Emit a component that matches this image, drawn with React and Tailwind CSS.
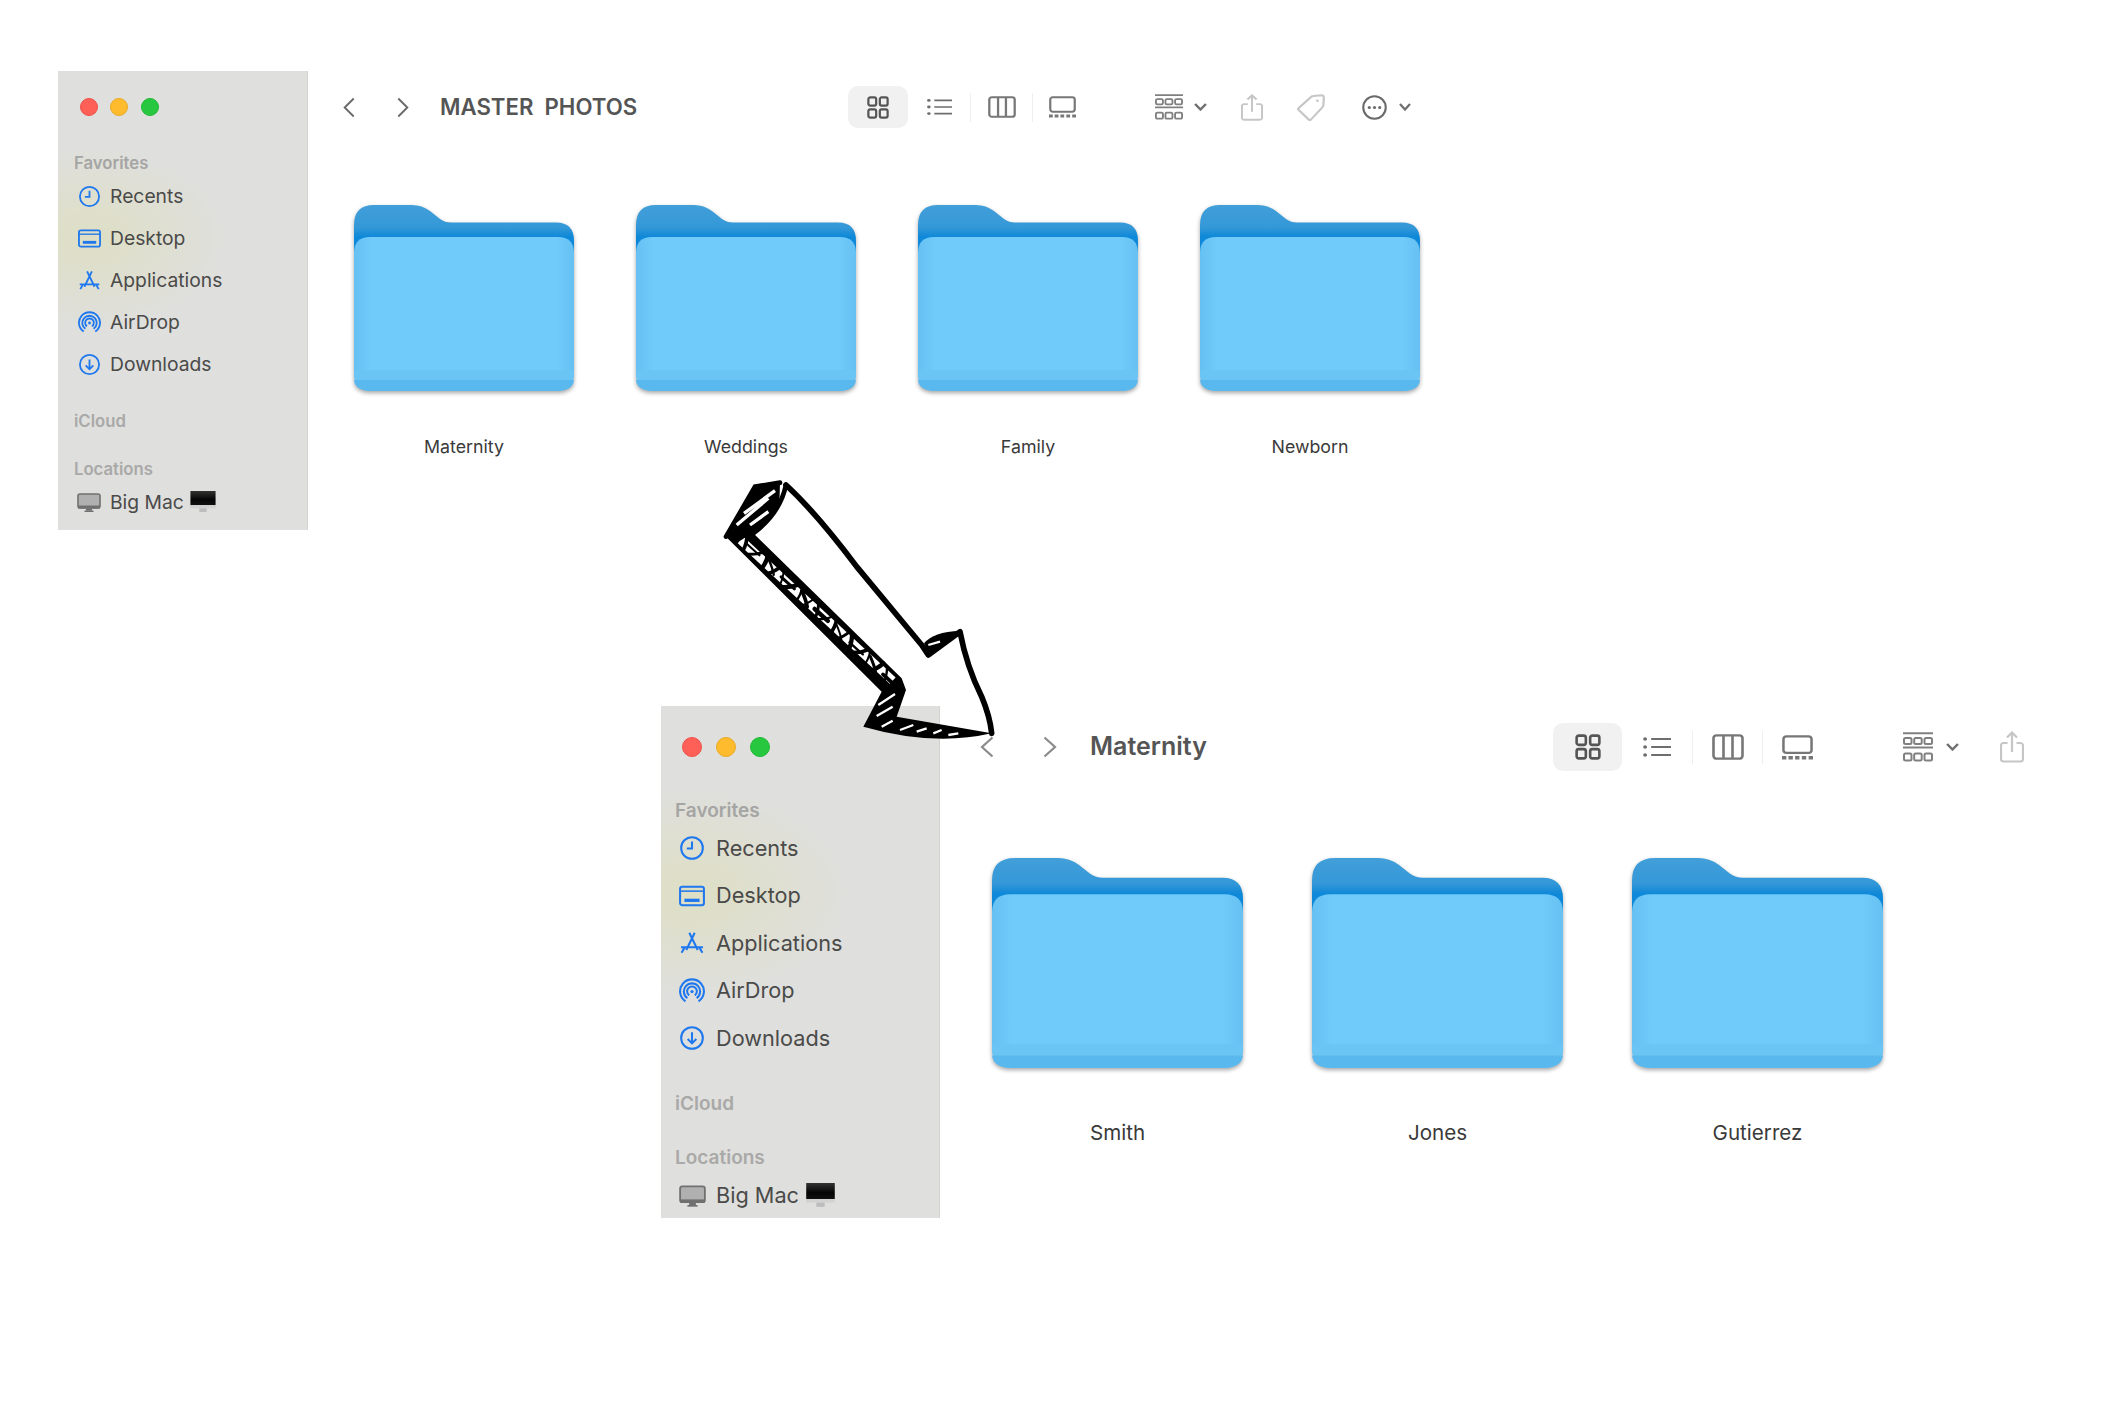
import React from 'react';

const FONT = 'font-["Inter","Liberation_Sans",sans-serif]';

const topFolders = ['Maternity', 'Weddings', 'Family', 'Newborn'];
const bottomFolders = ['Smith', 'Jones', 'Gutierrez'];

function FolderIcon({ className }) {
    return (
        <svg viewBox="0 0 220 186" preserveAspectRatio="none" className={`block overflow-visible drop-shadow-[0_2px_2px_rgba(0,0,0,0.35)] ${className}`}>
            <defs>
                <linearGradient id="folderBack" x1="0" y1="0" x2="0" y2="1">
                    <stop offset="0" stopColor="#429fd9" />
                    <stop offset="0.28" stopColor="#3498d8" />
                    <stop offset="0.4" stopColor="#0e88d8" />
                </linearGradient>
                <linearGradient id="folderFront" x1="0" y1="0" x2="1" y2="0">
                    <stop offset="0" stopColor="#66c1f2" />
                    <stop offset="0.08" stopColor="#70cbfb" />
                    <stop offset="0.92" stopColor="#70cbfb" />
                    <stop offset="1" stopColor="#66c1f2" />
                </linearGradient>
            </defs>
            <path d="M0 20 Q0 0 20 0 H58 Q68 0 76 6 L86 14 Q91 17.5 97 17.5 H202 Q220 17.5 220 36 V80 H0 Z" fill="url(#folderBack)" />
            <path d="M0 48 Q0 32 16 32 H204 Q220 32 220 48 V168 Q220 186 202 186 H18 Q0 186 0 168 Z" fill="url(#folderFront)" />
            <path d="M0 165 H220 V168 Q220 186 202 186 H18 Q0 186 0 168 Z" fill="#6ac5f5" />
            <path d="M0 175 H220 Q219 186 202 186 H18 Q1 186 0 175 Z" fill="#59b9ee" />
        </svg>
    );
}

// toolbar glyphs
const GridIcon = ({ className }) => (
    <svg viewBox="0 0 24 24" preserveAspectRatio="none" fill="none" stroke="currentColor" strokeWidth="2.4" className={className}>
        <rect x="1.5" y="1.5" width="8.5" height="8.5" rx="2" />
        <rect x="14" y="1.5" width="8.5" height="8.5" rx="2" />
        <rect x="1.5" y="14" width="8.5" height="8.5" rx="2" />
        <rect x="14" y="14" width="8.5" height="8.5" rx="2" />
    </svg>
);

const ListIcon = ({ className }) => (
    <svg viewBox="0 0 24 22" preserveAspectRatio="none" fill="none" stroke="currentColor" strokeWidth="2.1" className={className}>
        <path d="M7 3h17M7 11h17M7 19h17" />
        <circle cx="1.8" cy="3" r="1.7" fill="currentColor" stroke="none" />
        <circle cx="1.8" cy="11" r="1.7" fill="currentColor" stroke="none" />
        <circle cx="1.8" cy="19" r="1.7" fill="currentColor" stroke="none" />
    </svg>
);

const ColumnsIcon = ({ className }) => (
    <svg viewBox="0 0 32 28" preserveAspectRatio="none" fill="none" stroke="currentColor" strokeWidth="2.6" className={className}>
        <rect x="1.5" y="1.5" width="29" height="25" rx="3" />
        <path d="M11.5 1.5v25M20.5 1.5v25" />
    </svg>
);

const GalleryIcon = ({ className }) => (
    <svg viewBox="0 0 32 28" preserveAspectRatio="none" fill="none" stroke="currentColor" strokeWidth="2.6" className={className}>
        <rect x="1.5" y="1.5" width="29" height="18.5" rx="3" />
        <path d="M0 25.5h4.5M6.7 25.5h4.5M13.5 25.5h4.5M20.5 25.5h4.5M27.5 25.5h4.5" strokeWidth="4" />
    </svg>
);

const GroupIcon = ({ className }) => (
    <svg viewBox="0 0 30 30" preserveAspectRatio="none" fill="none" stroke="currentColor" strokeWidth="2" className={className}>
        <path d="M0 1.2h30M0 15.5h30" />
        <rect x="1" y="6" width="7.5" height="6" rx="1.5" />
        <rect x="11.2" y="6" width="7.5" height="6" rx="1.5" />
        <rect x="21.5" y="6" width="7.5" height="6" rx="1.5" />
        <rect x="1" y="21.5" width="7.5" height="7" rx="1.5" />
        <rect x="11.2" y="21.5" width="7.5" height="7" rx="1.5" />
        <rect x="21.5" y="21.5" width="7.5" height="7" rx="1.5" />
    </svg>
);

const ChevronDown = ({ className }) => (
    <svg viewBox="0 0 12 8" preserveAspectRatio="none" fill="none" stroke="currentColor" strokeWidth="2.3" className={className}>
        <path d="M1 1l5 5.5L11 1" />
    </svg>
);

const ShareIcon = ({ className }) => (
    <svg viewBox="0 0 24 32" preserveAspectRatio="none" fill="none" stroke="currentColor" strokeWidth="2.2" className={className}>
        <path d="M7.5 12H3.5a2.5 2.5 0 0 0-2.5 2.5V28a2.5 2.5 0 0 0 2.5 2.5h17A2.5 2.5 0 0 0 23 28V14.5A2.5 2.5 0 0 0 20.5 12h-4" />
        <path d="M12 21V2M7 6.5L12 1.5l5 5" />
    </svg>
);

const TagIcon = ({ className }) => (
    <svg viewBox="0 0 24 27" preserveAspectRatio="none" fill="none" stroke="currentColor" strokeWidth="1.9" className={className}>
        <path d="M14 2L21 1.2Q23 1.2 23 3.6L22.6 11Q22.5 12.6 21.5 13.6L12 25.5Q11 26.6 10 25.5L1.5 16Q.5 15 1.5 14L12 3Q13 2 14 2Z" />
        <circle cx="17.5" cy="6.8" r="1.2" fill="currentColor" stroke="none" />
    </svg>
);

const MoreIcon = ({ className }) => (
    <svg viewBox="0 0 24 24" preserveAspectRatio="none" fill="none" stroke="currentColor" strokeWidth="2" className={className}>
        <circle cx="12" cy="12" r="10.8" />
        <circle cx="7" cy="12" r="1.5" fill="currentColor" stroke="none" />
        <circle cx="12" cy="12" r="1.5" fill="currentColor" stroke="none" />
        <circle cx="17" cy="12" r="1.5" fill="currentColor" stroke="none" />
    </svg>
);

const NavChevron = ({ dir, className }) => (
    <svg viewBox="0 0 14 22" preserveAspectRatio="none" fill="none" stroke="currentColor" strokeWidth="2.2" className={className}>
        <path d={dir === 'left' ? 'M12.5 1.5L2 11l10.5 9.5' : 'M1.5 1.5L12 11 1.5 20.5'} />
    </svg>
);

// sidebar glyphs
const sidebarIcons = {
    Recents: (
        <>
            <circle cx="12" cy="12" r="10" />
            <path d="M12 6v6.4H7.2" />
        </>
    ),
    Desktop: (
        <>
            <rect x="1" y="3.5" width="22" height="17" rx="2" />
            <path d="M1 7.5h22" strokeWidth="1.4" />
            <rect x="5" y="14.5" width="14" height="3" fill="currentColor" stroke="none" />
        </>
    ),
    Applications: <path d="M9.5 2.5l7.8 16M14.5 2.5L6.7 18.5M1.8 16h20.4M2.4 21l2.6-4.5M21.6 21L19 16.5" />,
    AirDrop: (
        <>
            <path d="M5.98 21.5A11 11 0 1 1 18.02 21.5M7.7 18.6A7.5 7.5 0 1 1 16.3 18.6M9.42 16A4.5 4.5 0 1 1 14.58 16" />
            <circle cx="12" cy="12.5" r="1.5" fill="currentColor" stroke="none" />
        </>
    ),
    Downloads: (
        <>
            <circle cx="12" cy="12" r="10" />
            <path d="M12 6.8v10M8 13l4 4 4-4" />
        </>
    ),
};

const favorites = ['Recents', 'Desktop', 'Applications', 'AirDrop', 'Downloads'];

function MacDrive({ className }) {
    return (
        <svg viewBox="0 0 24 21" className={className}>
            <rect x="1" y="2" width="22" height="14" rx="2" fill="#b0b0b0" stroke="#707070" strokeWidth="1.6" />
            <rect x="1" y="13.5" width="22" height="3" fill="#707070" />
            <path d="M9 16.5h6v2.2H9z" fill="#707070" />
            <path d="M7.5 18.5h9V20h-9z" fill="#707070" />
        </svg>
    );
}

function IMacEmoji({ className }) {
    return (
        <svg viewBox="0 0 24 21" className={className}>
            <defs>
                <linearGradient id="imacScreen" x1="0" y1="0" x2="0" y2="1">
                    <stop offset="0" stopColor="#333" />
                    <stop offset="0.6" stopColor="#050505" />
                    <stop offset="1" stopColor="#111" />
                </linearGradient>
            </defs>
            <rect x="0" y="0" width="24" height="13.5" fill="url(#imacScreen)" />
            <rect x="0" y="13.5" width="24" height="3" fill="#d2d2d2" />
            <rect x="8.5" y="16.5" width="7" height="3.5" fill="#bcbcbc" />
        </svg>
    );
}

function Sidebar({ big }) {
    const s = big
        ? {
              root: 'w-[279px] h-[512px] bg-[radial-gradient(ellipse_160px_105px_at_30px_187px,#dedfc4,transparent)] pt-[31px]',
              dots: 'pl-[21px] gap-[14px]',
              dot: 'size-[20px]',
              header: 'h-[22px] leading-[22px] pl-[14px] text-[19px]',
              fav: 'mt-[42.5px]',
              rows: 'mt-[3px]',
              row: 'h-[47.5px] pl-[17px]',
              slot: 'w-[28px]',
              icon: 'size-[26px]',
              label: 'ml-[10px] text-[21.7px]',
              icloud: 'mt-[31px]',
              locations: 'mt-[32px]',
              macRow: 'mt-[4px]',
              mac: 'w-[27px] h-[24px]',
              imac: 'w-[29px] h-[25px] ml-[7px]',
          }
        : {
              root: 'w-[250px] h-[459px] bg-[radial-gradient(ellipse_140px_90px_at_30px_167px,#dedfc4,transparent)] pt-[27px]',
              dots: 'pl-[21.5px] gap-[12.5px]',
              dot: 'size-[18px]',
              header: 'h-[20px] leading-[20px] pl-[16px] text-[16.7px]',
              fav: 'mt-[37px]',
              rows: 'mt-[2px]',
              row: 'h-[42px] pl-[19px]',
              slot: 'w-[24px]',
              icon: 'size-[23px]',
              label: 'ml-[9px] text-[19.3px]',
              icloud: 'mt-[26px]',
              locations: 'mt-[28px]',
              macRow: 'mt-[2px]',
              mac: 'w-[24px] h-[21px]',
              imac: 'w-[26px] h-[22px] ml-[6px]',
          };

    return (
        <aside className={`shrink-0 bg-[#dfdfdd] border-r border-[#d3d3d1] flex flex-col ${s.root}`}>
            <div className={`flex items-center ${s.dots}`}>
                <span className={`rounded-full bg-[#fe5f57] border border-[#ee5048] ${s.dot}`} />
                <span className={`rounded-full bg-[#febb2e] border border-[#eaaa24] ${s.dot}`} />
                <span className={`rounded-full bg-[#27c83f] border border-[#20b835] ${s.dot}`} />
            </div>

            <div className={`font-semibold text-[#a5a5a4] ${s.header} ${s.fav}`}>Favorites</div>
            <div className={s.rows}>
                {favorites.map(name => (
                    <div key={name} className={`flex items-center ${s.row}`}>
                        <span className={`flex justify-center shrink-0 ${s.slot}`}>
                            <svg viewBox="0 0 24 24" fill="none" stroke="currentColor" strokeWidth="1.9" className={`text-[#1f78ee] shrink-0 ${s.icon}`}>
                                {sidebarIcons[name]}
                            </svg>
                        </span>
                        <span className={`text-[#4a4a49] ${s.label}`}>{name}</span>
                    </div>
                ))}
            </div>

            <div className={`font-semibold text-[#a9a9a8] ${s.header} ${s.icloud}`}>iCloud</div>
            <div className={`font-semibold text-[#a9a9a8] ${s.header} ${s.locations}`}>Locations</div>
            <div className={`flex items-center ${s.row} ${s.macRow}`}>
                <span className={`flex justify-center shrink-0 ${s.slot}`}>
                    <MacDrive className={s.mac} />
                </span>
                <span className={`text-[#4a4a49] ${s.label}`}>Big Mac</span>
                <IMacEmoji className={s.imac} />
            </div>
        </aside>
    );
}

function TopToolbar() {
    return (
        <div className="flex items-center h-[42px] mt-[15px]">
            <NavChevron dir="left" className="w-[12px] h-[21px] ml-[35px] text-[#6a6a6a] shrink-0" />
            <NavChevron dir="right" className="w-[12px] h-[21px] ml-[42px] text-[#6a6a6a] shrink-0" />
            <h1 className="w-[408px] ml-[31px] shrink-0 text-[22.2px] font-semibold text-[#555] whitespace-pre">MASTER  PHOTOS</h1>
            <div className="w-[60px] h-[42px] rounded-[10px] bg-[#f1f1f1] flex items-center justify-center shrink-0">
                <GridIcon className="w-[22px] h-[23px] text-[#555]" />
            </div>
            <div className="w-[62px] flex justify-center shrink-0">
                <ListIcon className="w-[25px] h-[18px] text-[#6e6e6e]" />
            </div>
            <div className="w-px h-[29px] bg-[#eeeeee] shrink-0" />
            <div className="w-[61px] flex justify-center shrink-0">
                <ColumnsIcon className="w-[28px] h-[22px] text-[#777]" />
            </div>
            <div className="w-px h-[29px] bg-[#eeeeee] shrink-0" />
            <div className="w-[59px] flex justify-center shrink-0">
                <GalleryIcon className="w-[27px] h-[22px] text-[#777]" />
            </div>
            <GroupIcon className="w-[28px] h-[26px] ml-[63px] text-[#808080] shrink-0" />
            <ChevronDown className="w-[13px] h-[8px] ml-[11px] text-[#707070] shrink-0" />
            <ShareIcon className="w-[22px] h-[27px] ml-[34px] text-[#c6c6c6] shrink-0" />
            <TagIcon className="w-[28px] h-[27px] ml-[34px] text-[#c6c6c6] shrink-0" />
            <MoreIcon className="w-[25px] h-[25px] ml-[37px] text-[#6a6a6a] shrink-0" />
            <ChevronDown className="w-[12px] h-[8px] ml-[12px] text-[#707070] shrink-0" />
        </div>
    );
}

function BottomToolbar() {
    return (
        <div className="flex items-center h-[48px] mt-[17px]">
            <NavChevron dir="left" className="w-[14px] h-[22px] ml-[40px] text-[#8a8a8a] shrink-0" />
            <NavChevron dir="right" className="w-[14px] h-[22px] ml-[49px] text-[#8a8a8a] shrink-0" />
            <h1 className="w-[463px] ml-[33px] shrink-0 text-[25px] font-semibold text-[#555]">Maternity</h1>
            <div className="w-[69px] h-[48px] rounded-[10px] bg-[#f1f1f1] flex items-center justify-center shrink-0">
                <GridIcon className="w-[26px] h-[26px] text-[#555]" />
            </div>
            <div className="w-[70px] flex justify-center shrink-0">
                <ListIcon className="w-[28px] h-[22px] text-[#6e6e6e]" />
            </div>
            <div className="w-px h-[33px] bg-[#eeeeee] shrink-0" />
            <div className="w-[69px] flex justify-center shrink-0">
                <ColumnsIcon className="w-[32px] h-[26px] text-[#777]" />
            </div>
            <div className="w-px h-[33px] bg-[#eeeeee] shrink-0" />
            <div className="w-[69px] flex justify-center shrink-0">
                <GalleryIcon className="w-[31px] h-[25px] text-[#777]" />
            </div>
            <GroupIcon className="w-[30px] h-[30px] ml-[71px] text-[#808080] shrink-0" />
            <ChevronDown className="w-[13px] h-[8px] ml-[13px] text-[#707070] shrink-0" />
            <ShareIcon className="w-[24px] h-[32px] ml-[41px] text-[#c6c6c6] shrink-0" />
        </div>
    );
}

// Uneven black scribbles across the white inner band of the arrow's side
const shaftHatch = [0, 0.03, 0.08, 0.105, 0.16, 0.2, 0.22, 0.27, 0.31, 0.33, 0.385, 0.42, 0.44, 0.5, 0.53, 0.55, 0.61, 0.645, 0.67, 0.72, 0.76, 0.78, 0.83, 0.87, 0.89, 0.95, 0.98].map((t, i) => {
    const x = 122 + 456 * t;
    const y = 203 + 437 * t;
    const [dx, dy] = [[22, -12], [6, -24], [-20, -18], [24, -4], [10, -22], [-8, -24]][i % 6];
    return { d: `M${x - dx} ${y - dy}Q${x + 5} ${y + 5} ${x + dx} ${y + dy}`, w: [7, 11, 6, 9, 13][i % 5] };
});

function HandArrow() {
    return (
        <svg viewBox="0 0 960 900" className="absolute left-[700px] top-[470px] w-[320px] h-[300px] pointer-events-none">
            {/* shaft side and cap */}
            <path d="M78 200L165 50 240 38 238 105 160 190 605 625 618 660 590 740 875 790Q700 830 490 770L545 665Z" fill="#000" />
            <path d="M78 200L165 50 240 38" fill="none" stroke="#000" strokeWidth="14" strokeLinecap="round" />
            {/* top face is left white */}
            <path d="M258 45Q350 130 470 290L665 525 685 555 780 485Q800 590 845 680 870 740 875 790" fill="none" stroke="#000" strokeWidth="17" strokeLinecap="round" strokeLinejoin="round" />
            <path d="M258 45Q240 130 160 190" fill="none" stroke="#000" strokeWidth="14" strokeLinecap="round" />
            <path d="M672 520Q700 485 780 482L690 558Z" fill="#000" />
            {/* hatching */}
            <path d="M110 165L205 85M132 130L225 62M150 165L205 125" stroke="#fff" strokeWidth="10" fill="none" />
            <path d="M685 525L720 515" stroke="#fff" strokeWidth="7" fill="none" />
            <path d="M122 210L578 632" stroke="#fff" strokeWidth="26" fill="none" />
            {shaftHatch.map((h, i) => (
                <path key={i} d={h.d} stroke="#000" strokeWidth={h.w} fill="none" strokeLinecap="round" />
            ))}
            <path d="M535 705L585 672M530 738L578 710M545 770L578 752M600 780L640 765M650 785L680 775M700 790L725 780M745 795L775 790" stroke="#fff" strokeWidth="7" fill="none" />
        </svg>
    );
}

export default function App() {
    return (
        <div className={`relative w-[2126px] h-[1406px] bg-white overflow-hidden ${FONT}`}>
            <section className="flex ml-[58px] pt-[71px]">
                <Sidebar />
                <div className="flex flex-col">
                    <TopToolbar />
                    <div className="flex gap-[62px] ml-[46px] mt-[77px]">
                        {topFolders.map(name => (
                            <div key={name} className="w-[220px] flex flex-col items-center">
                                <FolderIcon className="w-[220px] h-[186px]" />
                                <span className="mt-[44px] text-[17.8px] leading-[24px] text-[#3a3a3a]">{name}</span>
                            </div>
                        ))}
                    </div>
                </div>
            </section>

            <section className="flex ml-[661px] mt-[176px]">
                <Sidebar big />
                <div className="flex flex-col">
                    <BottomToolbar />
                    <div className="flex gap-[69px] ml-[52px] mt-[87px]">
                        {bottomFolders.map(name => (
                            <div key={name} className="w-[251px] flex flex-col items-center">
                                <FolderIcon className="w-[251px] h-[210px]" />
                                <span className="mt-[52px] text-[20.6px] leading-[26px] text-[#3a3a3a]">{name}</span>
                            </div>
                        ))}
                    </div>
                </div>
            </section>

            <HandArrow />
        </div>
    );
}
